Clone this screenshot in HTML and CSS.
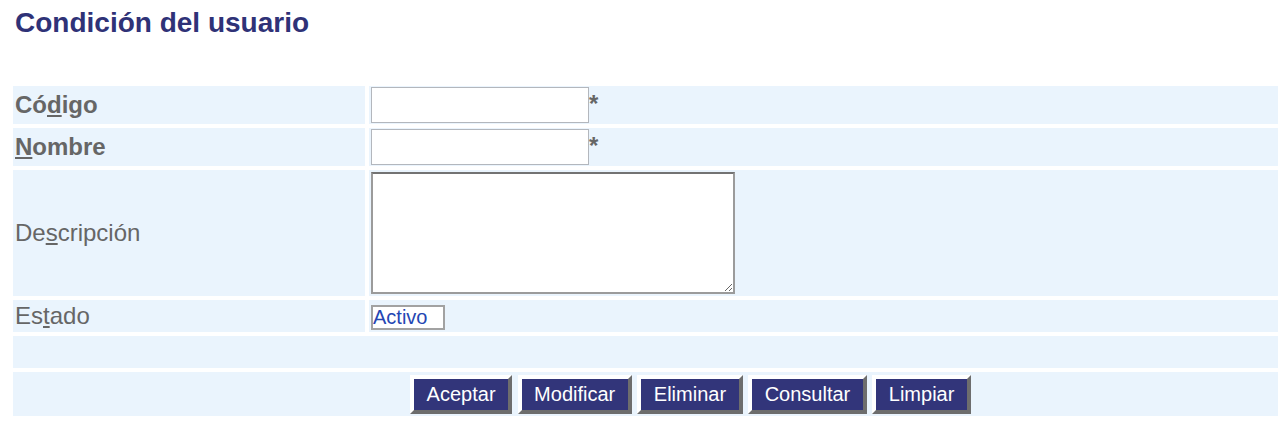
FILE: index.html
```html
<!DOCTYPE html>
<html lang="es">

<head>
    <meta charset="UTF-8">
    <meta name="viewport" content="width=device-width, initial-scale=1.0">
    <title>Condición del usuario</title>
    <link rel="stylesheet" href="styles.css">
</head>

<body>
    <h1 class="titulo">Condición del usuario</h1>

    <form id="formCondicion" class="form-condicion">
        <table class="tabla-form">
            <tr class="fila-texto">
                <td class="etiqueta obligatorio"><label for="codigo">Có<u>d</u>igo</label></td>
                <td class="campo"><input id="codigo" name="codigo" type="text" class="texto" accesskey="d">*</td>
            </tr>
            <tr class="fila-texto">
                <td class="etiqueta obligatorio"><label for="nombre"><u>N</u>ombre</label></td>
                <td class="campo"><input id="nombre" name="nombre" type="text" class="texto" accesskey="n">*</td>
            </tr>
            <tr>
                <td class="etiqueta"><label for="descripcion">De<u>s</u>cripción</label></td>
                <td class="campo"><textarea id="descripcion" name="descripcion" class="area" accesskey="s"></textarea></td>
            </tr>
            <tr class="fila-estado">
                <td class="etiqueta">Es<u>t</u>ado</td>
                <td class="campo"><span class="estado">Activo</span></td>
            </tr>
            <tr class="fila-vacia">
                <td colspan="2"></td>
            </tr>
            <tr class="fila-botones">
                <td colspan="2" class="botones">
                    <button type="submit" class="boton">Aceptar</button>
                    <button type="button" class="boton">Modificar</button>
                    <button type="button" class="boton">Eliminar</button>
                    <button type="button" class="boton">Consultar</button>
                    <button type="reset" class="boton">Limpiar</button>
                </td>
            </tr>
        </table>
    </form>
</body>

</html>
```

FILE: styles.css
```css
body {
    margin: 0;
    font-family: "Liberation Sans", Arial, sans-serif;
    background-color: #fff;
}

.titulo {
    margin: 0;
    padding: 7px 0 0 15px;
    font-size: 28px;
    line-height: 32px;
    font-weight: bold;
    color: #2f3277;
}

.form-condicion {
    margin: 0;
}

.tabla-form {
    margin: 43px 0 0 13px;
    width: calc(100% - 13px);
    border-spacing: 0 4px;
}

.tabla-form td {
    background-color: #eaf4fd;
    padding: 1px 2px;
    font-size: 20px;
}

.etiqueta {
    width: 348px;
    border-right: 4px solid #fff;
    color: #666;
    font-size: 24px !important;
}

.obligatorio {
    font-weight: bold;
}

.campo {
    color: #666;
    font-weight: bold;
    font-size: 24px !important;
}

.texto {
    width: 218px;
    height: 36px;
    margin: 0;
    padding: 0 4px;
    box-sizing: border-box;
    border: 1px solid #b3b7bd;
    font-family: inherit;
    font-size: 20px;
    background-color: #fff;
}

.area {
    display: block;
    width: 364px;
    height: 122px;
    margin: 1px 0;
    box-sizing: border-box;
    border: 2px solid #9b9b9b;
    border-top-color: #737373;
    font-family: inherit;
    font-size: 16px;
    background-color: #fff;
}

.fila-estado,
.fila-vacia {
    height: 32px;
}

.estado {
    display: inline-block;
    width: 74px;
    height: 25px;
    box-sizing: border-box;
    border: 2px solid #a2a2a2;
    background-color: #fff;
    color: #2446b3;
    font-size: 20px;
    font-weight: normal;
    line-height: 21px;
    vertical-align: middle;
}

.fila-botones {
    height: 44px;
}

.tabla-form .botones {
    padding-left: 92px;
    text-align: center;
}

.boton {
    margin: 0;
    padding: 4px 12.5px;
    border: 4px solid;
    border-color: #fff #6d6d6d #6d6d6d #fff;
    background-color: #32357a;
    color: #fff;
    font-family: inherit;
    font-size: 20px;
    line-height: 23px;
    cursor: pointer;
}

.boton:hover {
    background-color: #24275e;
}
```
